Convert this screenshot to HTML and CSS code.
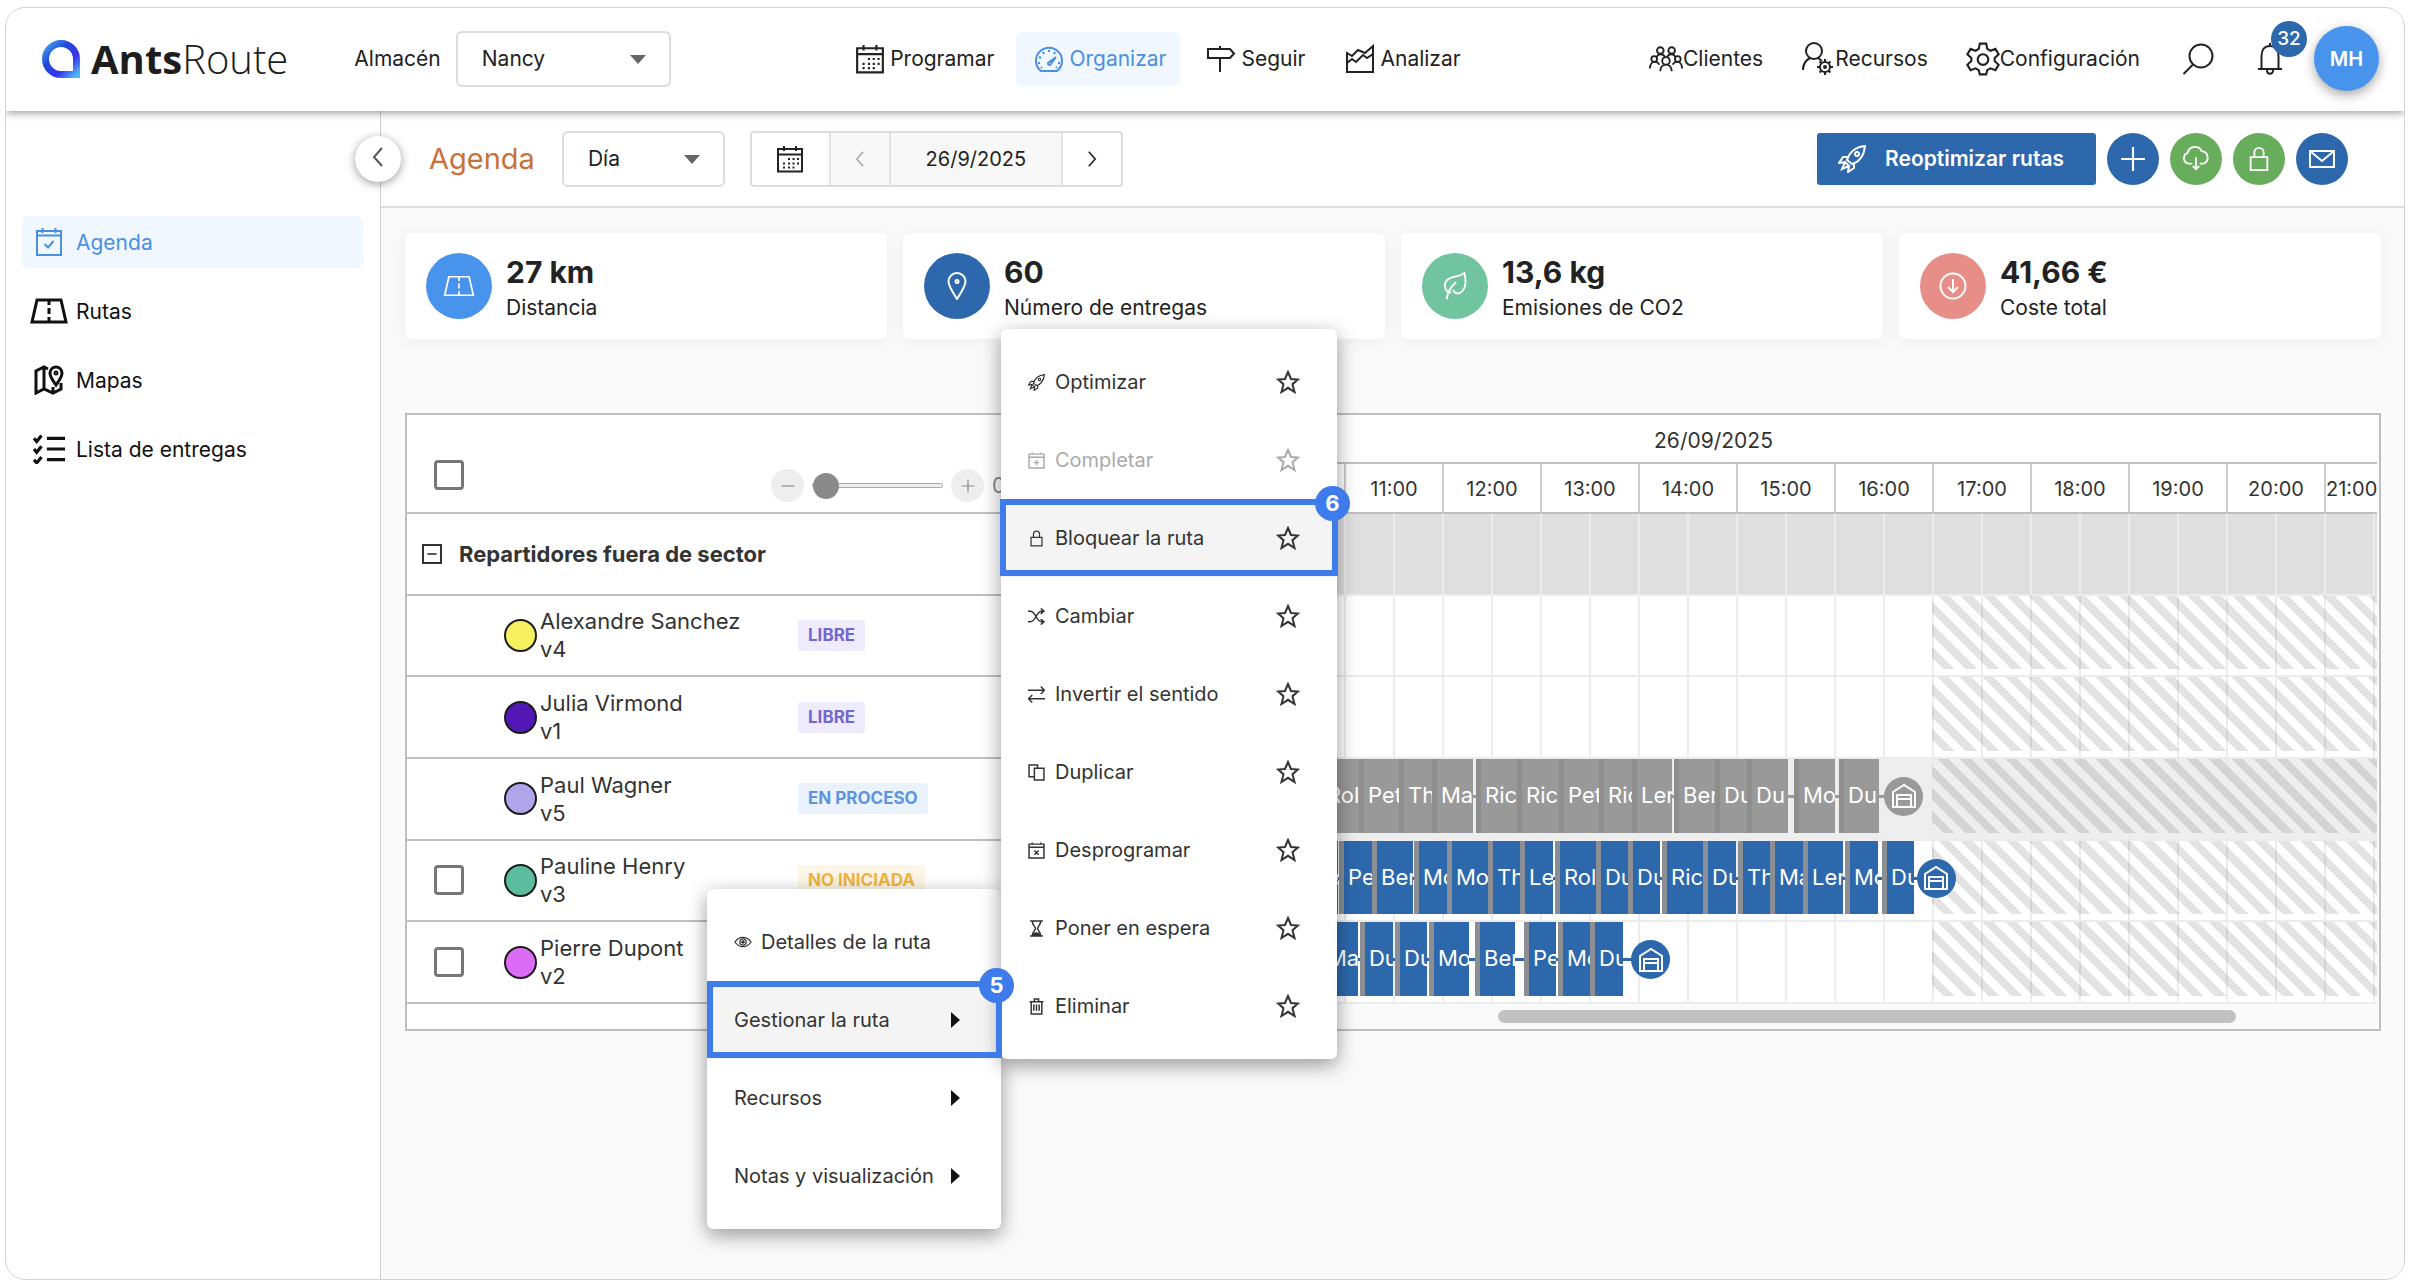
FILE: index.html
```html
<!DOCTYPE html>
<html lang="es">
<head>
  <meta charset="UTF-8" />
  <meta name="viewport" content="width=device-width, initial-scale=1.0" />
  <title>AntsRoute - Agenda</title>
  <link rel="stylesheet" href="styles.css">
</head>
<body>
  <!-- Iconos compartidos -->
  <svg class="sprite" aria-hidden="true">
    <symbol id="i-calendar" viewBox="0 0 28 28">
      <path d="M2 4h24v22.500H2zM2 9.500h24M8 1v5M20 1v5" />
      <path class="dots" d="M12 14h2M16.500 14h2M21 14h2M7 18.500h2M12 18.500h2M16.500 18.500h2M21 18.500h2M7 22.500h2M12 22.500h2M16.500 22.500h2" />
    </symbol>
    <symbol id="i-gauge" viewBox="0 0 30 28">
      <path d="M7 26A13 13 0 1 1 23 26zM14 18l8-6-6 8a2 2 0 0 1-2-2z" />
      <path d="M15 5v2M9 7l1 2M21 7l-1 2M5 12l2 1M4 18h2M26 18h-2M7 23l1-1M23 23l-1-1" />
    </symbol>
    <symbol id="i-sign" viewBox="0 0 30 28">
      <path d="M2 4h22l4 4.500-4 4.500H2zM14 1v3M14 13v14" />
    </symbol>
    <symbol id="i-chart" viewBox="0 0 30 30">
      <path d="M2 28V9l5 3 6-6 7 3 8-7v26zM2 19l5-4 4 3 7-7 4 3 6-4" />
    </symbol>
    <symbol id="i-users" viewBox="0 0 36 28">
      <circle cx="12" cy="5" r="3.500" /><circle cx="24" cy="5" r="3.500" />
      <circle cx="5.500" cy="14" r="3" /><circle cx="30.500" cy="14" r="3" />
      <circle cx="18" cy="16" r="4" />
      <path d="M1 24c0-4 2-7 5-7 2 0 4 1 5 3M35 24c0-4-2-7-5-7-2 0-4 1-5 3M12 27c0-5 3-7 6-7s6 2 6 7M8 12c1-2 2-3 4-3s4 1 5 3M28 12c-1-2-2-3-4-3s-4 1-5 3" />
    </symbol>
    <symbol id="i-user-cog" viewBox="0 0 32 34">
      <circle cx="12" cy="9" r="8" />
      <path d="M1 28c0-6 3-10 7-12M16 16l4 3" />
      <circle cx="23" cy="25" r="5" /><circle cx="23" cy="25" r="1" />
      <path d="M23 17v3M23 30v3M15 25h3M28 25h3M17.500 19.500l2 2M26.500 28.500l2 2M28.500 19.500l-2 2M17.500 30.500l2-2" />
    </symbol>
    <symbol id="i-gear" viewBox="0 0 32 32">
      <path d="M13 1.500h6l1 5 3 1.700 4.700-1.700 3 5-3.700 3.500v3l3.700 3.500-3 5-4.700-1.700-3 1.700-1 4h-6l-1-4-3-1.700-4.700 1.700-3-5L5 18v-3l-3.700-3.500 3-5L9 8.200l3-1.700z" />
      <circle cx="16" cy="16.500" r="5" />
    </symbol>
    <symbol id="i-search" viewBox="0 0 32 32">
      <circle cx="19" cy="13" r="11.500" /><path d="M11 21.500L1.500 31" />
    </symbol>
    <symbol id="i-bell" viewBox="0 0 26 34">
      <path d="M4.500 27V14c0-6 3-10 8.500-10s8.500 4 8.500 10v13M1 27h24M13 4V1M10 28c0 5 6 5 6 0" />
    </symbol>
    <symbol id="i-cal-check" viewBox="0 0 28 30">
      <path d="M2 4h24v24H2zM2 8.500h24M7.500 1v5M20.500 1v5M9.500 17l3.500 3.500 5.500-6.500" />
    </symbol>
    <symbol id="i-road" viewBox="0 0 38 26">
      <path d="M7 2h24l5 22H2zM19 2v5M19 10v6M19 19v5" />
    </symbol>
    <symbol id="i-map" viewBox="0 0 30 30">
      <path d="M14 4L10 2 2 6v22l8-4 9 4 8-4v-6M10 2v22M19 28v-6" />
      <path d="M22 20c-4-6-6-8-6-12a6 6 0 0 1 12 0c0 4-2 6-6 12z" /><circle cx="22" cy="8" r="1" />
    </symbol>
    <symbol id="i-checklist" viewBox="0 0 30 28">
      <path d="M13 4h17M13 14h17M13 24h17M1 4l2.500 3L8 1.500M1 14l2.500 3L8 11.500M1 24l2.500 3L8 21.500" />
    </symbol>
    <symbol id="i-rocket" viewBox="0 0 28 28">
      <path d="M9 15C11 8 17 2 27 1c-1 10-6 16-13 18zM10 12l-5 0-4 6 6-1M16 18l0 5-6 4 1-6M7 17l4 4-7 3z" />
      <circle cx="19" cy="9" r="2" />
    </symbol>
    <symbol id="i-cloud" viewBox="0 0 30 26">
      <path d="M11 18H7a6 6 0 0 1-1-11.500A8 8 0 0 1 21 4.500 7 7 0 0 1 23 18h-4M15 11v13M11.500 20.500L15 24l3.500-3.500" />
    </symbol>
    <symbol id="i-lock" viewBox="0 0 22 28">
      <path d="M2 12h18v14H2zM6 12V7a5 5 0 0 1 10 0v5" />
    </symbol>
    <symbol id="i-mail" viewBox="0 0 28 20">
      <path d="M2 2h24v16H2zM2 2l12 10L26 2" />
    </symbol>
    <symbol id="i-pin" viewBox="0 0 20 28">
      <path d="M10 27C5 19 1.500 14 1.500 9.500a8.500 8.500 0 0 1 17 0C18.500 14 15 19 10 27z" /><circle cx="10" cy="9.500" r="1.500" />
    </symbol>
    <symbol id="i-leaf" viewBox="0 0 26 30">
      <path d="M9 22C1 22 0 10 7 7c5-3 12-2 16-6 2 8 2 17-4 21-3 2-7 1-8-3M4 29c1-7 4-13 10-18" />
    </symbol>
    <symbol id="i-down" viewBox="0 0 28 28">
      <circle cx="14" cy="14" r="12.500" /><path d="M14 7v13M9 15l5 5 5-5" />
    </symbol>
    <symbol id="i-left" viewBox="0 0 12 20"><path d="M10 1L2 10l8 9" /></symbol>
    <symbol id="i-right" viewBox="0 0 12 20"><path d="M2 1l8 9-8 9" /></symbol>
    <symbol id="i-plus" viewBox="0 0 24 24"><path d="M12 1v22M1 12h22" /></symbol>
    <symbol id="i-minus" viewBox="0 0 24 24"><path d="M1 12h22" /></symbol>
    <symbol id="i-star" viewBox="0 0 24 24">
      <path d="M12 2l3 7 7 .500-5.500 4.700L18.500 22 12 17.800 5.500 22l2-7.800L2 9.500 9 9z" />
    </symbol>
    <symbol id="i-eye" viewBox="0 0 20 14">
      <path class="thin" d="M1 7c5-7 13-7 18 0-5 7-13 7-18 0z" /><circle class="thin" cx="10" cy="7" r="3.500" /><circle cx="10" cy="7" r="1" />
    </symbol>
    <symbol id="i-cal-plus" viewBox="0 0 16 16">
      <path class="thin" d="M1 2h14v13H1zM1 5h14M4 .500v2M12 .500v2M8 7.500v5M5.500 10h5" />
    </symbol>
    <symbol id="i-cal-x" viewBox="0 0 16 16">
      <path class="thin" d="M1 2h14v13H1zM1 5h14M4 .500v2M12 .500v2M6 8l4 4M10 8l-4 4" />
    </symbol>
    <symbol id="i-shuffle" viewBox="0 0 16 16">
      <path class="thin" d="M0 3h2c6 0 5 10 11 10h2M0 13h2c6 0 5-10 11-10h2M12 .500L15 3l-3 2.500M12 10.500l3 2.500-3 2.500" />
    </symbol>
    <symbol id="i-swap" viewBox="0 0 16 16">
      <path class="thin" d="M0 4h15M12 .500L15.500 4 12 7.500M16 12H1M4 8.500L.500 12 4 15.500" />
    </symbol>
    <symbol id="i-copy" viewBox="0 0 16 16">
      <path class="thin" d="M6 4h9v11H6zM6 12H1V1h8v3" />
    </symbol>
    <symbol id="i-hourglass" viewBox="0 0 16 16">
      <path class="thin" d="M2 1h12M2 15h12M4 1c0 4 3 5 3 7s-3 3-3 7M12 1c0 4-3 5-3 7s3 3 3 7" /><path class="solid" d="M5 14c1-2 5-2 6 0z" />
    </symbol>
    <symbol id="i-trash" viewBox="0 0 16 16">
      <path class="thin" d="M1.500 3.500h13M3 3.500V15h10V3.500M6 3V1h4v2M5.500 6v6M8 6v6M10.500 6v6" />
    </symbol>
    <symbol id="i-depot" viewBox="0 0 26 26">
      <path d="M2 24V9l11-7 11 7v15h-4V12H6v12zM6 16h14M6 24h14" />
    </symbol>
  </svg>

  <div class="app">
    <header class="header">
      <div class="header-left">
        <a class="logo" href="#">
          <svg class="logo-mark" viewBox="0 0 40 40">
            <defs>
              <linearGradient id="logoGrad" x1="0" y1="0" x2="1" y2="1">
                <stop offset="0" stop-color="#45a4f0" />
                <stop offset="0.350" stop-color="#1f49d8" />
                <stop offset="0.700" stop-color="#3a35ee" />
                <stop offset="1" stop-color="#4db4f5" />
              </linearGradient>
            </defs>
            <path d="M35.500 35.500H20A15.500 15.500 0 1 1 35.500 20z" fill="none" stroke="url(#logoGrad)" stroke-width="7" />
          </svg>
          <span><b>Ants</b>Route</span>
        </a>
        <label class="depot-label" for="depot">Almacén</label>
        <div class="select select-depot">
          <select id="depot"><option>Nancy</option></select>
        </div>
      </div>

      <nav class="nav nav-center">
        <a href="#"><svg class="icon"><use href="#i-calendar" /></svg>Programar</a>
        <a class="active" href="#"><svg class="icon"><use href="#i-gauge" /></svg>Organizar</a>
        <a href="#"><svg class="icon"><use href="#i-sign" /></svg>Seguir</a>
        <a href="#"><svg class="icon"><use href="#i-chart" /></svg>Analizar</a>
      </nav>

      <div class="header-right">
        <nav class="nav nav-right">
          <a href="#"><svg class="icon wide"><use href="#i-users" /></svg>Clientes</a>
          <a href="#"><svg class="icon wide"><use href="#i-user-cog" /></svg>Recursos</a>
          <a href="#"><svg class="icon wide"><use href="#i-gear" /></svg>Configuración</a>
        </nav>
        <button class="plain search" aria-label="Buscar"><svg><use href="#i-search" /></svg></button>
        <button class="plain bell" aria-label="Notificaciones"><svg><use href="#i-bell" /></svg><span class="count">32</span></button>
        <button class="avatar">MH</button>
      </div>
    </header>

    <div class="layout">
      <aside class="sidebar">
        <a class="active" href="#"><svg><use href="#i-cal-check" /></svg>Agenda</a>
        <a href="#"><svg><use href="#i-road" /></svg>Rutas</a>
        <a href="#"><svg><use href="#i-map" /></svg>Mapas</a>
        <a href="#"><svg><use href="#i-checklist" /></svg>Lista de entregas</a>
        <button class="collapse" aria-label="Contraer"><svg><use href="#i-left" /></svg></button>
      </aside>

      <main class="main">
        <div class="toolbar">
          <h1>Agenda</h1>
          <div class="select select-view">
            <select aria-label="Vista"><option>Día</option></select>
          </div>
          <div class="date-group">
            <button class="d-cal" aria-label="Calendario"><svg><use href="#i-calendar" /></svg></button>
            <button class="d-prev" aria-label="Anterior" disabled><svg><use href="#i-left" /></svg></button>
            <span class="d-text">26/9/2025</span>
            <button class="d-next" aria-label="Siguiente"><svg><use href="#i-right" /></svg></button>
          </div>
          <div class="actions">
            <button class="btn-primary"><svg><use href="#i-rocket" /></svg>Reoptimizar rutas</button>
            <button class="round" aria-label="Añadir"><svg><use href="#i-plus" /></svg></button>
            <button class="round green" aria-label="Descargar"><svg><use href="#i-cloud" /></svg></button>
            <button class="round green" aria-label="Bloquear"><svg><use href="#i-lock" /></svg></button>
            <button class="round" aria-label="Enviar"><svg><use href="#i-mail" /></svg></button>
          </div>
        </div>

        <div class="content">
          <section class="cards">
            <div class="card">
              <span class="card-icon sky"><svg><use href="#i-road" /></svg></span>
              <div><strong>27 km</strong><span>Distancia</span></div>
            </div>
            <div class="card">
              <span class="card-icon blue"><svg><use href="#i-pin" /></svg></span>
              <div><strong>60</strong><span>Número de entregas</span></div>
            </div>
            <div class="card">
              <span class="card-icon mint"><svg><use href="#i-leaf" /></svg></span>
              <div><strong>13,6 kg</strong><span>Emisiones de CO2</span></div>
            </div>
            <div class="card">
              <span class="card-icon coral"><svg><use href="#i-down" /></svg></span>
              <div><strong>41,66 €</strong><span>Coste total</span></div>
            </div>
          </section>

          <section class="gantt">
            <div class="resources">
              <div class="res-head">
                <input type="checkbox" aria-label="Seleccionar todo">
                <div class="zoom">
                  <button aria-label="Reducir"><svg><use href="#i-minus" /></svg></button>
                  <input type="range" min="0" max="100" value="0" aria-label="Zoom">
                  <button aria-label="Ampliar"><svg><use href="#i-plus" /></svg></button>
                  <span>0</span>
                </div>
              </div>
              <div class="rows">
                <div class="row group">
                  <button class="toggle" aria-label="Contraer grupo"><svg><use href="#i-minus" /></svg></button>
                  <b>Repartidores fuera de sector</b>
                </div>
                <div class="row">
                  <span class="check"></span><span class="dot yellow"></span>
                  <div class="driver">Alexandre Sanchez<br>v4</div><span class="tag free">LIBRE</span>
                </div>
                <div class="row">
                  <span class="check"></span><span class="dot purple"></span>
                  <div class="driver">Julia Virmond<br>v1</div><span class="tag free">LIBRE</span>
                </div>
                <div class="row">
                  <span class="check"></span><span class="dot lilac"></span>
                  <div class="driver">Paul Wagner<br>v5</div><span class="tag progress">EN PROCESO</span>
                </div>
                <div class="row">
                  <span class="check"><input type="checkbox" aria-label="Pauline Henry"></span><span class="dot teal"></span>
                  <div class="driver">Pauline Henry<br>v3</div><span class="tag idle">NO INICIADA</span>
                </div>
                <div class="row">
                  <span class="check"><input type="checkbox" aria-label="Pierre Dupont"></span><span class="dot pink"></span>
                  <div class="driver">Pierre Dupont<br>v2</div>
                </div>
              </div>
              <div class="res-foot"></div>
            </div>

            <div class="timeline">
              <div class="day">26/09/2025</div>
              <div class="hours" id="hours"></div>
              <div class="rows" id="lanes">
                <div class="lane group"></div>
                <div class="lane off"></div>
                <div class="lane off"></div>
                <div class="lane off done" data-route="v5"></div>
                <div class="lane off" data-route="v3"></div>
                <div class="lane off" data-route="v2"></div>
                <div class="grid-lines" id="gridLines"></div>
              </div>
              <div class="scrollbar"><span></span></div>
            </div>
          </section>
        </div>

        <!-- Menú contextual -->
        <div class="menu menu-route">
          <button class="detail"><svg><use href="#i-eye" /></svg>Detalles de la ruta</button>
          <button class="marked">Gestionar la ruta<i class="caret"></i></button>
          <button>Recursos<i class="caret"></i></button>
          <button>Notas y visualización<i class="caret"></i></button>
        </div>
        <div class="menu menu-actions">
          <button><svg><use href="#i-rocket" /></svg>Optimizar<svg class="star"><use href="#i-star" /></svg></button>
          <button disabled><svg><use href="#i-cal-plus" /></svg>Completar<svg class="star"><use href="#i-star" /></svg></button>
          <button class="marked"><svg><use href="#i-lock" /></svg>Bloquear la ruta<svg class="star"><use href="#i-star" /></svg></button>
          <button><svg><use href="#i-shuffle" /></svg>Cambiar<svg class="star"><use href="#i-star" /></svg></button>
          <button><svg><use href="#i-swap" /></svg>Invertir el sentido<svg class="star"><use href="#i-star" /></svg></button>
          <button><svg><use href="#i-copy" /></svg>Duplicar<svg class="star"><use href="#i-star" /></svg></button>
          <button><svg><use href="#i-cal-x" /></svg>Desprogramar<svg class="star"><use href="#i-star" /></svg></button>
          <button><svg><use href="#i-hourglass" /></svg>Poner en espera<svg class="star"><use href="#i-star" /></svg></button>
          <button><svg><use href="#i-trash" /></svg>Eliminar<svg class="star"><use href="#i-star" /></svg></button>
        </div>
        <div class="step step-5"><span>5</span></div>
        <div class="step step-6"><span>6</span></div>
      </main>
    </div>
  </div>

  <script>
    // 98 unidades por hora, la jornada empieza a las 8:00
    const HOUR = 98;
    const SPAN = 1327;

    // [etiqueta, inicio, fin]
    const routes = {
      v5: {
        stops: [['Rol', 268, 309], ['Pet', 309, 349], ['Th', 349, 382], ['Ma', 382, 423], ['Ric', 426, 467], ['Ric', 467, 509],
          ['Pet', 509, 549], ['Ric', 549, 582], ['Ler', 582, 622], ['Ber', 624, 665], ['Du', 665, 697], ['Du', 697, 738],
          ['Mo', 744, 785], ['Du', 789, 829]],
        depot: 854
      },
      v3: {
        stops: [['Le', 256, 288], ['Pe', 289, 322], ['Ber', 322, 363], ['Mo', 364, 397], ['Mo', 397, 438], ['Th', 438, 470],
          ['Le', 470, 503], ['Rol', 505, 546], ['Du', 546, 578], ['Du', 578, 610], ['Ric', 612, 653], ['Du', 653, 686],
          ['Th', 688, 720], ['Ma', 720, 753], ['Ler', 753, 793], ['Mo', 795, 828], ['Du', 832, 864]],
        depot: 887
      },
      v2: {
        stops: [['Ma', 268, 308], ['Du', 310, 343], ['Du', 345, 377], ['Mo', 379, 419], ['Ber', 425, 465], ['Pe', 474, 506],
          ['Mo', 508, 540], ['Du', 540, 573]],
        depot: 601
      }
    };

    const pct = v => (v / SPAN * 100) + '%';

    function drawHours() {
      const hours = document.getElementById('hours');
      const lines = document.getElementById('gridLines');
      for (let h = 8; h <= 21; h++) {
        const start = (h - 8) * HOUR;
        const cell = document.createElement('span');
        cell.textContent = h + ':00';
        cell.style.width = pct(Math.min(HOUR, SPAN - start));
        hours.appendChild(cell);
      }
      for (let x = 0; x < SPAN; x += HOUR / 2) {
        const line = document.createElement('i');
        line.style.left = pct(x);
        lines.appendChild(line);
      }
    }

    function drawRoute(lane) {
      const route = routes[lane.dataset.route];
      const first = route.stops[0][1];

      const link = document.createElement('i');
      link.className = 'link';
      link.style.left = pct(first);
      link.style.width = pct(route.depot - first);
      lane.appendChild(link);

      route.stops.forEach(([label, from, to]) => {
        const bar = document.createElement('div');
        bar.className = 'stop';
        bar.textContent = label;
        bar.style.left = pct(from);
        bar.style.width = pct(to - from);
        lane.appendChild(bar);
      });

      const depot = document.createElement('div');
      depot.className = 'depot';
      depot.style.left = pct(route.depot);
      depot.innerHTML = '<svg><use href="#i-depot" /></svg>';
      lane.appendChild(depot);
    }

    drawHours();
    document.querySelectorAll('[data-route]').forEach(drawRoute);
  </script>
</body>
</html>
```
FILE: styles.css
```css
* {
  box-sizing: border-box;
}
body {
  margin: 0;
  padding: 7px 5px 6px;
  min-height: 100vh;
  display: flex;
  background: #fff;
  color: #222;
  font-family: Inter, "Open Sans", sans-serif;
  font-size: 21px;
}
a {
  color: inherit;
  text-decoration: none;
}
button,
select {
  font: inherit;
  color: inherit;
}
button {
  border: none;
  background: none;
  padding: 0;
  cursor: pointer;
}
svg {
  fill: none;
  stroke: currentColor;
  stroke-width: 2;
  flex: none;
}
.sprite {
  position: absolute;
  width: 0;
  height: 0;
}
.dots {
  stroke-width: 2;
}
.thin {
  stroke-width: 1.4;
}
.solid {
  fill: currentColor;
}
.app {
  flex: 1;
  min-width: 0;
  display: flex;
  flex-direction: column;
  border: 1px solid #d3d3d3;
  border-radius: 20px;
  overflow: hidden;
}

/* Cabecera */
.header {
  position: relative;
  z-index: 2;
  height: 103px;
  flex: none;
  display: flex;
  align-items: center;
  justify-content: space-between;
  padding: 0 25px 2px 35px;
  background: #fff;
  box-shadow: 0 2px 8px rgba(0, 0, 0, 0.4);
}
.header-left,
.header-right {
  display: flex;
  align-items: center;
}
.logo {
  display: flex;
  align-items: center;
  gap: 10px;
  font-family: "Open Sans", sans-serif;
  font-size: 40px;
  font-weight: 300;
  line-height: 50px;
  color: #1d1d1d;
}
.logo b {
  font-weight: 700;
}
.logo-mark {
  width: 40px;
  height: 40px;
}
.depot-label {
  margin-left: 66px;
  margin-right: 15px;
}
.select {
  position: relative;
}
.select select {
  appearance: none;
  width: 100%;
  height: 56px;
  padding: 0 24px;
  border: 2px solid #dcdcdc;
  border-radius: 6px;
  background: #fff;
}
.select::after {
  content: "";
  position: absolute;
  right: 25px;
  top: 24px;
  border: 8px solid transparent;
  border-top: 9px solid #666;
  border-bottom: none;
  pointer-events: none;
}
.select-depot {
  width: 215px;
}
.select-view {
  width: 163px;
}
.nav {
  display: flex;
  gap: 8px;
}
.nav-center {
  margin-left: 10px;
}
.nav a {
  display: flex;
  align-items: center;
  gap: 5px;
  height: 54px;
  padding: 0 14px 0 18px;
  border-radius: 6px;
}
.nav a.active {
  color: #4a90e2;
  background: #f0f7fe;
}
.icon {
  width: 30px;
  height: 30px;
}
.icon.wide {
  width: 34px;
  height: 34px;
}
.nav-right {
  gap: 6px;
}
.nav-right a {
  gap: 0;
}
.plain svg {
  display: block;
  width: 32px;
  height: 34px;
}
.search {
  margin-left: 28px;
}
.bell {
  position: relative;
  margin-left: 40px;
}
.count {
  position: absolute;
  left: 17px;
  top: -21px;
  width: 36px;
  height: 36px;
  border-radius: 50%;
  background: #2d68ad;
  color: #fff;
  font-size: 19px;
  font-weight: 500;
  line-height: 36px;
}
.avatar {
  width: 65px;
  height: 65px;
  margin-left: 28px;
  border-radius: 50%;
  background: #4894ec;
  color: #fff;
  font-size: 20px;
  font-weight: 600;
  box-shadow: 0 4px 12px rgba(0, 0, 0, 0.35);
}

/* Barra lateral */
.layout {
  flex: 1;
  display: flex;
}
.sidebar {
  position: relative;
  z-index: 1;
  width: 375px;
  flex: none;
  display: flex;
  flex-direction: column;
  gap: 17px;
  padding: 105px 17px 0 16px;
  border-right: 1px solid #cfcfcf;
}
.sidebar a {
  display: flex;
  align-items: center;
  gap: 8px;
  height: 52px;
  padding-left: 8px;
  border-radius: 6px;
  color: #111;
}
.sidebar a svg {
  width: 38px;
  height: 30px;
  stroke-width: 3;
}
.sidebar a.active {
  color: #4a90e2;
  background: #f0f7fe;
}
.sidebar a.active svg {
  stroke-width: 2;
}
.collapse {
  position: absolute;
  right: -21px;
  top: 25px;
  width: 46px;
  height: 46px;
  border-radius: 50%;
  background: #fff;
  color: #555;
  box-shadow: 0 2px 10px rgba(0, 0, 0, 0.4);
}
.collapse svg {
  width: 12px;
  height: 20px;
}

/* Barra de herramientas */
.main {
  position: relative;
  flex: 1;
  min-width: 0;
  display: flex;
  flex-direction: column;
}
.toolbar {
  height: 97px;
  display: flex;
  align-items: center;
  padding: 0 56px 0 48px;
  border-bottom: 2px solid #dedede;
}
h1 {
  margin: 0 27px 0 0;
  color: #c8713a;
  font-size: 29px;
  font-weight: 400;
}
.date-group {
  display: flex;
  height: 56px;
  margin-left: 25px;
  border: 2px solid #dcdcdc;
  border-radius: 4px;
}
.date-group > * {
  display: flex;
  align-items: center;
  justify-content: center;
  border-right: 2px solid #e2e2e2;
}
.date-group > :last-child {
  border-right: none;
}
.date-group svg {
  width: 12px;
  height: 16px;
}
.date-group .d-cal {
  width: 79px;
}
.date-group .d-cal svg {
  width: 28px;
  height: 28px;
}
.d-prev {
  width: 60px;
  color: #aaa;
  background: #f8f8f8;
}
.d-text {
  width: 172px;
  font-size: 20px;
  background: #f8f8f8;
}
.d-next {
  width: 58px;
}
.actions {
  display: flex;
  gap: 11px;
  margin-left: auto;
}
.btn-primary {
  display: flex;
  align-items: center;
  gap: 19px;
  height: 52px;
  padding: 0 32px 0 21px;
  border-radius: 3px;
  background: #2d68ad;
  color: #fff;
  font-weight: 600;
}
.btn-primary svg {
  width: 28px;
  height: 28px;
}
.round {
  display: flex;
  align-items: center;
  justify-content: center;
  width: 52px;
  height: 52px;
  border-radius: 50%;
  background: #2d68ad;
  color: #fff;
}
.round.green {
  background: #68ad5c;
}
.round svg {
  width: 28px;
  height: 26px;
}

/* Tarjetas */
.content {
  flex: 1;
  padding: 25px 23px 0 24px;
  background: #fafafa;
}
.cards {
  display: grid;
  grid-template-columns: repeat(4, 1fr);
  gap: 16px;
}
.card {
  display: flex;
  align-items: center;
  gap: 14px;
  height: 106px;
  padding: 4px 21px 0;
  border-radius: 6px;
  background: #fff;
  box-shadow: 0 2px 16px rgba(0, 0, 0, 0.06);
}
.card-icon {
  display: flex;
  align-items: center;
  justify-content: center;
  width: 66px;
  height: 66px;
  margin-bottom: 4px;
  border-radius: 50%;
  color: #fff;
}
.card-icon svg {
  width: 32px;
  height: 28px;
}
.sky { background: #4894ec; }
.blue { background: #2d68ad; }
.mint { background: #70c4a0; }
.coral { background: #e78e88; }
.card strong,
.card div span {
  display: block;
}
.card strong {
  margin-bottom: 5px;
  font-size: 30px;
  line-height: 34px;
}
.card div span {
  line-height: 28px;
}

/* Planificación */
.gantt {
  display: flex;
  margin-top: 74px;
  border: 2px solid #bfbfbf;
  background: #fff;
}
.resources {
  width: 643px;
  flex: none;
}
.res-head {
  display: flex;
  align-items: center;
  height: 99px;
  padding: 22px 0 0 27px;
  border-bottom: 2px solid #bfbfbf;
}
input[type="checkbox"] {
  appearance: none;
  display: block;
  width: 30px;
  height: 30px;
  margin: 0;
  border: 3px solid #777;
  border-radius: 4px;
  background: #fff;
}
.zoom {
  display: flex;
  align-items: center;
  gap: 8px;
  margin: 22px 0 0 307px;
  color: #888;
}
.zoom button {
  display: flex;
  align-items: center;
  justify-content: center;
  width: 33px;
  height: 33px;
  border-radius: 50%;
  background: #eee;
}
.zoom svg {
  width: 14px;
  height: 14px;
}
.zoom input {
  appearance: none;
  width: 131px;
  height: 5px;
  margin: 0;
  border: 1px solid #aaa;
  border-radius: 3px;
  background: #eee;
}
.zoom input::-webkit-slider-thumb {
  appearance: none;
  width: 26px;
  height: 26px;
  border-radius: 50%;
  background: #8a8a8a;
}
.rows {
  position: relative;
  display: grid;
  grid-auto-rows: 1fr;
  min-height: 490px;
}
.row {
  display: flex;
  align-items: center;
  border-bottom: 2px solid #bfbfbf;
  font-size: 22px;
  color: #333;
}
.row.group {
  gap: 17px;
  padding-left: 15px;
}
.toggle {
  display: flex;
  align-items: center;
  justify-content: center;
  width: 20px;
  height: 20px;
  border: 2px solid #333;
}
.toggle svg {
  width: 10px;
  height: 10px;
  stroke-width: 4;
}
.check {
  width: 70px;
  margin-left: 27px;
}
.dot {
  width: 33px;
  height: 33px;
  border: 2px solid #1c1c1c;
  border-radius: 50%;
}
.yellow { background: #f6ef5f; }
.purple { background: #5217b5; }
.lilac { background: #b0a5ea; }
.teal { background: #5bbd9d; }
.pink { background: #dc6cf5; }
.driver {
  width: 261px;
  padding-left: 3px;
  line-height: 28px;
}
.tag {
  padding: 0 10px;
  border-radius: 3px;
  font-size: 17px;
  font-weight: 700;
  line-height: 31px;
}
.free { color: #7367d0; background: #eeecfc; }
.progress { color: #5e93df; background: #eaf3fd; }
.idle { color: #f0b440; background: #fdf6e6; }
.timeline {
  flex: 1;
  min-width: 0;
  display: flex;
  flex-direction: column;
  border-right: 2px solid #fafafa;
  font-size: 21px;
  color: #333;
}
.day {
  height: 49px;
  line-height: 52px;
  text-align: center;
  border-bottom: 2px solid #bfbfbf;
}
.hours {
  display: flex;
  height: 50px;
  border-bottom: 2px solid #bfbfbf;
  font-size: 20px;
  line-height: 50px;
  text-align: center;
}
.hours span {
  border-left: 2px solid #ccc;
  white-space: nowrap;
}
.lane {
  position: relative;
  border-bottom: 2px solid #ececec;
}
.lane.group {
  background: #dfdfdf;
}
.lane.done {
  background: #eee;
}
.lane.off::before {
  content: "";
  position: absolute;
  z-index: 1;
  left: 66.500%;
  right: 0;
  top: 0;
  bottom: 6px;
  background: repeating-linear-gradient(45deg, transparent 0 8px, rgba(0, 0, 0, 0.11) 8px 16px);
}
.grid-lines {
  position: absolute;
  inset: 0;
}
.grid-lines i {
  position: absolute;
  top: 0;
  bottom: 0;
  border-left: 2px solid #ececec;
}
.stop {
  position: absolute;
  z-index: 2;
  top: 0;
  bottom: 6px;
  padding-left: 4px;
  border-left: 5px solid #8b8f93;
  overflow: hidden;
  background: #2d68ad;
  color: #fff;
  font-size: 22px;
  line-height: 72px;
  white-space: nowrap;
}
.link {
  position: absolute;
  z-index: 2;
  top: 36px;
  height: 3px;
  background: #2d68ad;
}
.depot {
  position: absolute;
  z-index: 2;
  top: 18px;
  display: flex;
  align-items: center;
  justify-content: center;
  width: 39px;
  height: 39px;
  margin-left: -20px;
  border-radius: 50%;
  background: #2d68ad;
  color: #fff;
}
.depot svg {
  width: 26px;
  height: 26px;
}
.done .stop,
.done .link,
.done .depot {
  background: #999;
}
.done .stop {
  border-color: #8e8e8e;
}
.res-foot,
.scrollbar {
  height: 25px;
}
.scrollbar {
  padding: 6px 0;
  background: #fafafa;
}
.scrollbar span {
  display: block;
  width: 738px;
  height: 13px;
  margin-left: 448px;
  border-radius: 7px;
  background: #c1c1c1;
}

/* Menús */
.menu {
  position: absolute;
  z-index: 3;
  padding: 14px 0;
  border-radius: 6px;
  background: #fff;
  box-shadow: 0 6px 20px rgba(0, 0, 0, 0.4);
  font-size: 20px;
}
.menu button {
  display: flex;
  align-items: center;
  width: 100%;
  height: 78px;
  padding: 0 37px 0 27px;
  color: #333;
  text-align: left;
  white-space: nowrap;
}
.menu button:disabled {
  color: #aaa;
}
.menu button.marked {
  background: #f4f4f4;
}
.menu svg {
  width: 17px;
  height: 17px;
  margin-right: 10px;
}
.menu .star {
  width: 24px;
  height: 24px;
  margin: 0 0 0 auto;
}
.menu .detail svg {
  width: 18px;
  height: 14px;
  margin-right: 9px;
}
.caret {
  margin-left: auto;
  border: 8px solid transparent;
  border-left: 9px solid #111;
  border-right: none;
}
.menu-route {
  left: 326px;
  top: 778px;
  width: 294px;
}
.menu-route button {
  padding-right: 41px;
}
.menu-actions {
  left: 620px;
  top: 218px;
  width: 336px;
}
.step {
  position: absolute;
  z-index: 4;
  height: 77px;
  border: 6px solid #3f7ceb;
}
.step span {
  position: absolute;
  right: -18px;
  top: -19px;
  width: 35px;
  height: 35px;
  border-radius: 50%;
  background: #3f7ceb;
  color: #fff;
  font-size: 22px;
  font-weight: 700;
  line-height: 35px;
  text-align: center;
}
.step-5 {
  left: 326px;
  top: 870px;
  width: 295px;
}
.step-6 {
  left: 619px;
  top: 388px;
  width: 338px;
}
```
